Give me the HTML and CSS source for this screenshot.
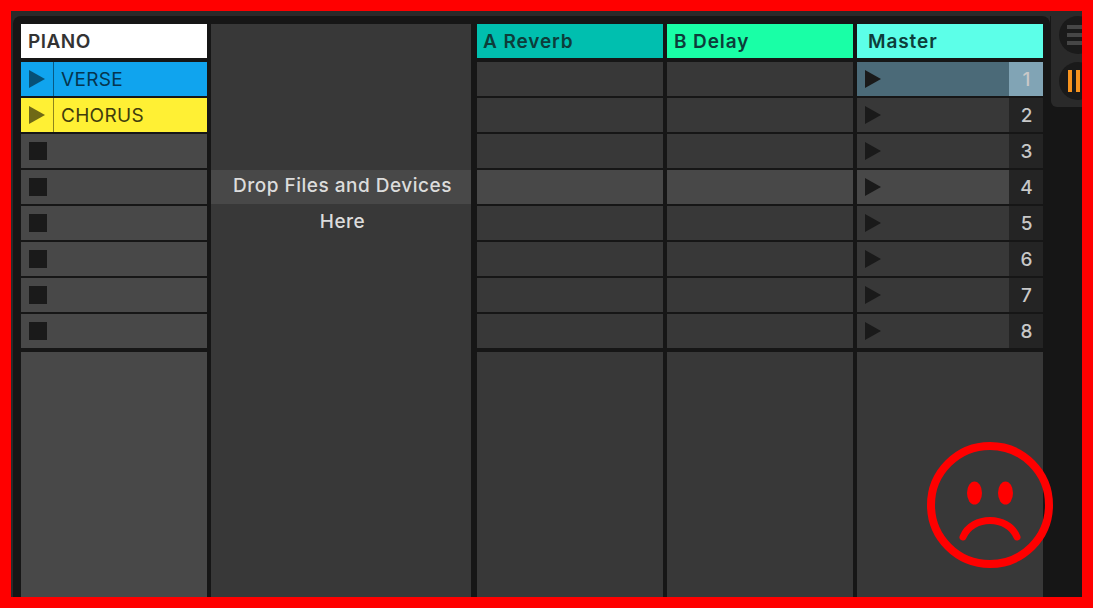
FILE: index.html
```html
<!DOCTYPE html>
<html lang="en">
<head>
    <meta charset="UTF-8">
    <title>Session View</title>
    <link rel="stylesheet" href="styles.css">
</head>
<body>
    <div class="frame">
        <main class="session">
            <section class="track track-midi">
                <header class="track-title title-piano">PIANO</header>
                <div class="clips">
                    <div class="clip clip-verse">
                        <span class="clip-slot"><svg class="play" viewBox="0 0 16 18"><path d="M0 0L16 9L0 18Z"/></svg></span>
                        <span class="clip-name">VERSE</span>
                    </div>
                    <div class="clip clip-chorus">
                        <span class="clip-slot"><svg class="play" viewBox="0 0 16 18"><path d="M0 0L16 9L0 18Z"/></svg></span>
                        <span class="clip-name">CHORUS</span>
                    </div>
                    <div class="clip clip-empty"><span class="stop"></span></div>
                    <div class="clip clip-empty"><span class="stop"></span></div>
                    <div class="clip clip-empty"><span class="stop"></span></div>
                    <div class="clip clip-empty"><span class="stop"></span></div>
                    <div class="clip clip-empty"><span class="stop"></span></div>
                    <div class="clip clip-empty"><span class="stop"></span></div>
                </div>
                <div class="track-rest rest-light"></div>
            </section>

            <section class="track track-drop">
                <div class="drop-spacer"></div>
                <div class="clips">
                    <div class="clip"></div>
                    <div class="clip"></div>
                    <div class="clip"></div>
                    <div class="clip clip-hover drop-text">Drop Files and Devices</div>
                    <div class="clip drop-text">Here</div>
                </div>
            </section>

            <section class="track">
                <header class="track-title title-reverb">A Reverb</header>
                <div class="clips">
                    <div class="clip"></div>
                    <div class="clip"></div>
                    <div class="clip"></div>
                    <div class="clip clip-hover"></div>
                    <div class="clip"></div>
                    <div class="clip"></div>
                    <div class="clip"></div>
                    <div class="clip"></div>
                </div>
                <div class="track-rest"></div>
            </section>

            <section class="track">
                <header class="track-title title-delay">B Delay</header>
                <div class="clips">
                    <div class="clip"></div>
                    <div class="clip"></div>
                    <div class="clip"></div>
                    <div class="clip clip-hover"></div>
                    <div class="clip"></div>
                    <div class="clip"></div>
                    <div class="clip"></div>
                    <div class="clip"></div>
                </div>
                <div class="track-rest"></div>
            </section>

            <section class="track">
                <header class="track-title title-master">Master</header>
                <div class="clips">
                    <div class="clip scene scene-active">
                        <svg class="play" viewBox="0 0 16 18"><path d="M0 0L16 9L0 18Z"/></svg>
                        <span class="scene-number">1</span>
                    </div>
                    <div class="clip scene">
                        <svg class="play" viewBox="0 0 16 18"><path d="M0 0L16 9L0 18Z"/></svg>
                        <span class="scene-number">2</span>
                    </div>
                    <div class="clip scene">
                        <svg class="play" viewBox="0 0 16 18"><path d="M0 0L16 9L0 18Z"/></svg>
                        <span class="scene-number">3</span>
                    </div>
                    <div class="clip scene clip-hover">
                        <svg class="play" viewBox="0 0 16 18"><path d="M0 0L16 9L0 18Z"/></svg>
                        <span class="scene-number">4</span>
                    </div>
                    <div class="clip scene">
                        <svg class="play" viewBox="0 0 16 18"><path d="M0 0L16 9L0 18Z"/></svg>
                        <span class="scene-number">5</span>
                    </div>
                    <div class="clip scene">
                        <svg class="play" viewBox="0 0 16 18"><path d="M0 0L16 9L0 18Z"/></svg>
                        <span class="scene-number">6</span>
                    </div>
                    <div class="clip scene">
                        <svg class="play" viewBox="0 0 16 18"><path d="M0 0L16 9L0 18Z"/></svg>
                        <span class="scene-number">7</span>
                    </div>
                    <div class="clip scene">
                        <svg class="play" viewBox="0 0 16 18"><path d="M0 0L16 9L0 18Z"/></svg>
                        <span class="scene-number">8</span>
                    </div>
                </div>
                <div class="track-rest"></div>
            </section>
        </main>

        <aside class="side">
            <div class="side-tools">
                <div class="round-btn btn-menu"><span></span><span></span><span></span></div>
                <div class="round-btn btn-pause"><span></span><span></span></div>
            </div>
        </aside>

        <!-- sad face over the session -->
        <svg class="sad-face" viewBox="0 0 128 128">
            <circle cx="64" cy="64" r="59" fill="none" stroke="#ff0000" stroke-width="8"/>
            <ellipse cx="48.5" cy="52" rx="7.5" ry="11.5" fill="#ff0000"/>
            <ellipse cx="79.5" cy="52" rx="7.5" ry="11.5" fill="#ff0000"/>
            <path d="M37 96C46 74 82 74 91 96" fill="none" stroke="#ff0000" stroke-width="7" stroke-linecap="round"/>
        </svg>
    </div>
</body>
</html>
```

FILE: styles.css
```css
* {
    margin: 0;
    padding: 0;
    box-sizing: border-box;
}
html, body {
    width: 100%;
    height: 100%;
    overflow: hidden;
}
body {
    font-family: Inter, "Open Sans", sans-serif;
    background-color: #ff0000;
}
.frame {
    position: relative;
    display: flex;
    width: 1093px;
    height: 608px;
    border: 11px solid #ff0000;
    background-color: #2a2a2a;
    overflow: hidden;
    padding: 5px 0 0 2px;
}
.session {
    display: flex;
    width: 1037px;
    padding: 8px 7px 0 8px;
    background-color: #161616;
    border-radius: 8px 8px 0 0;
}
.track {
    display: flex;
    flex-direction: column;
    width: 186px;
    margin-right: 4px;
}
.track:last-child {
    margin-right: 0;
}
.track-drop {
    width: 260px;
    margin-right: 6px;
    background-color: #383838;
}
.track-title {
    height: 34px;
    flex-shrink: 0;
    padding-left: 7px;
    font-size: 19px;
    font-weight: 600;
    line-height: 35px;
    letter-spacing: 0.9px;
    color: #0d3d3a;
}
.title-piano {
    background-color: #ffffff;
    color: #333333;
    letter-spacing: 0.5px;
}
.title-reverb {
    padding-left: 6px;
    background-color: #00bfaf;
}
.title-delay {
    background-color: #19ffa6;
}
.title-master {
    background-color: #5cffe8;
    padding-left: 11px;
}
.drop-spacer {
    height: 34px;
    flex-shrink: 0;
}
.clips {
    display: flex;
    flex-direction: column;
    gap: 2px;
    margin-top: 4px;
}
.clip {
    display: flex;
    align-items: center;
    height: 34px;
    background-color: #383838;
}
.clip-hover {
    background-color: #484848;
}
.clip-empty {
    background-color: #484848;
    padding-left: 8px;
}
.stop {
    width: 18px;
    height: 18px;
    background-color: #1a1a1a;
}
.clip-verse {
    background-color: #10a4ee;
    color: #05354f;
}
.clip-chorus {
    background-color: #fff034;
    color: #403c0d;
}
.clip-slot {
    display: flex;
    align-items: center;
    width: 33px;
    height: 100%;
    padding-left: 8px;
    border-right: 1px solid rgba(0, 0, 0, 0.45);
}
.clip-slot .play {
    fill: currentColor;
    opacity: 0.75;
    margin: 0;
}
.clip-name {
    padding-left: 7px;
    font-size: 19px;
    letter-spacing: 0.3px;
}
.play {
    width: 16px;
    height: 18px;
    margin-left: 8px;
    fill: #1a1a1a;
}
.scene {
    justify-content: space-between;
}
.scene-number {
    width: 34px;
    height: 100%;
    padding-left: 1px;
    font-size: 19px;
    font-weight: 500;
    line-height: 36px;
    text-align: center;
    color: #c8c8c8;
    background-color: #242424;
}
.scene-active {
    background-color: #4b6a78;
}
.scene-active .scene-number {
    background-color: #81a4b5;
}
.drop-text {
    justify-content: center;
    align-items: flex-start;
    padding-left: 3px;
    font-size: 19px;
    font-weight: 500;
    line-height: 32px;
    letter-spacing: 0.5px;
    color: #dcdcdc;
}
.track-rest {
    flex: 1;
    margin-top: 4px;
    background-color: #383838;
}
.rest-light {
    background-color: #484848;
}
.side {
    flex: 1;
    background-color: #161616;
}
.side-tools {
    display: flex;
    flex-direction: column;
    gap: 8px;
    height: 91px;
    padding-left: 8px;
    margin-left: 1px;
    background-color: #2a2a2a;
    border-bottom-left-radius: 6px;
}
.round-btn {
    display: flex;
    flex-shrink: 0;
    width: 38px;
    height: 38px;
    border-radius: 50%;
    background-color: #1a1a1a;
}
.btn-menu {
    flex-direction: column;
    justify-content: center;
    gap: 4px;
    padding-left: 8px;
}
.btn-menu span {
    width: 22px;
    height: 4px;
    background-color: #464646;
}
.btn-pause {
    gap: 4px;
    padding: 8px 0 0 9px;
}
.btn-pause span {
    width: 4px;
    height: 22px;
    background-color: #f7931e;
}
.sad-face {
    position: absolute;
    left: 915px;
    top: 430px;
    width: 128px;
    height: 128px;
}
```
